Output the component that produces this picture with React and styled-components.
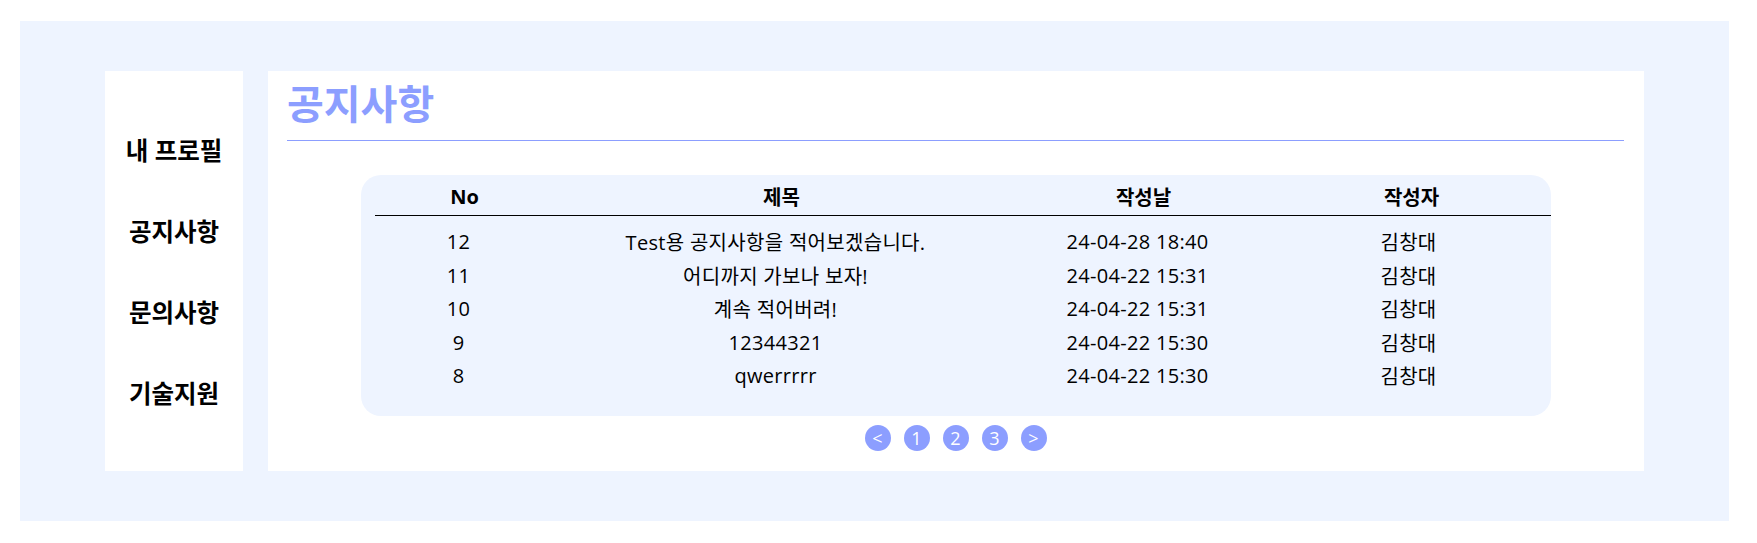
import styled, { createGlobalStyle } from "styled-components";
import { useState } from "react";

const GlobalStyle = createGlobalStyle`
  * {
    box-sizing: border-box;
  }
  body {
    margin: 0;
    background: #ffffff;
    font-family: "Open Sans", "Noto Sans CJK KR", sans-serif;
    color: #000000;
  }
`;

const notices = [
  { id: 12, title: "Test용 공지사항을 적어보겠습니다.", date: "24-04-28 18:40", writer: "김창대" },
  { id: 11, title: "어디까지 가보나 보자!", date: "24-04-22 15:31", writer: "김창대" },
  { id: 10, title: "계속 적어버려!", date: "24-04-22 15:31", writer: "김창대" },
  { id: 9, title: "12344321", date: "24-04-22 15:30", writer: "김창대" },
  { id: 8, title: "qwerrrrr", date: "24-04-22 15:30", writer: "김창대" },
];

const menus = ["내 프로필", "공지사항", "문의사항", "기술지원"];

const NoticePage = () => {
  const [page, setPage] = useState(1);

  return (
    <>
      <GlobalStyle />
      <Wrapper>
        <SideBar>
          {menus.map((m) => (
            <SideItem key={m}>{m}</SideItem>
          ))}
        </SideBar>

        <Content>
          <Title>공지사항</Title>

          <TableBox>
            <HeadRow>
              <Cell>No</Cell>
              <Cell>제목</Cell>
              <Cell>작성날</Cell>
              <Cell>작성자</Cell>
            </HeadRow>
            <Body>
              {notices.map((n) => (
                <Row key={n.id}>
                  <Cell>{n.id}</Cell>
                  <Cell>{n.title}</Cell>
                  <Cell>{n.date}</Cell>
                  <Cell>{n.writer}</Cell>
                </Row>
              ))}
            </Body>
          </TableBox>

          <Paging>
            <PageBtn onClick={() => setPage((p) => Math.max(1, p - 1))}>&lt;</PageBtn>
            {[1, 2, 3].map((n) => (
              <PageBtn key={n} $active={page === n} onClick={() => setPage(n)}>
                {n}
              </PageBtn>
            ))}
            <PageBtn onClick={() => setPage((p) => Math.min(3, p + 1))}>&gt;</PageBtn>
          </Paging>
        </Content>
      </Wrapper>
    </>
  );
};

/* ===== 스타일 ===== */

const Wrapper = styled.div`
  display: flex;
  gap: 25px;
  width: 1709px;
  height: 500px;
  margin: 21px 0 0 20px;
  padding: 50px 85px;
  background: #eef4ff;
`;

const SideBar = styled.nav`
  width: 138px;
  display: flex;
  flex-direction: column;
  justify-content: center;
  background: #ffffff;
`;

const SideItem = styled.div`
  height: 81px;
  display: flex;
  align-items: center;
  justify-content: center;
  font-size: 24.5px;
  font-weight: 700;
  cursor: pointer;
`;

const Content = styled.main`
  flex: 1;
  display: flex;
  flex-direction: column;
  padding: 9px 20px 0 19px;
  background: #ffffff;
`;

const Title = styled.h1`
  margin: 0;
  padding-bottom: 12px;
  border-bottom: 1px solid #8c9eff;
  font-size: 40px;
  line-height: 48px;
  font-weight: 700;
  color: #8c9eff;
`;

const TableBox = styled.section`
  width: 1190px;
  margin: 34px auto 0;
  padding-bottom: 23px;
  border-radius: 20px;
  background: #eef4ff;
`;

const cols = "168px 466px 258px 1fr";

const HeadRow = styled.div`
  display: grid;
  grid-template-columns: ${cols};
  align-items: center;
  height: 41px;
  margin-left: 14px;
  padding: 2px 0 0 6px;
  border-bottom: 1px solid #000000;
  font-size: 20px;
  font-weight: 700;
`;

const Body = styled.div`
  margin-left: 14px;
  padding-top: 9px;
`;

const Row = styled.div`
  display: grid;
  grid-template-columns: ${cols};
  align-items: center;
  height: 33.5px;
  font-size: 20px;
  letter-spacing: 0.3px;
`;

const Cell = styled.div`
  text-align: center;
  white-space: nowrap;
`;

const Paging = styled.div`
  display: flex;
  justify-content: center;
  gap: 13px;
  margin-top: 9px;
`;

const PageBtn = styled.button`
  width: 26px;
  height: 26px;
  padding: 0;
  border: none;
  border-radius: 50%;
  display: flex;
  align-items: center;
  justify-content: center;
  background: #8c9eff;
  color: #ffffff;
  font-family: "Open Sans", "Noto Sans CJK KR", sans-serif;
  font-size: 18px;
  line-height: 1;
  cursor: pointer;
`;

export default NoticePage;
